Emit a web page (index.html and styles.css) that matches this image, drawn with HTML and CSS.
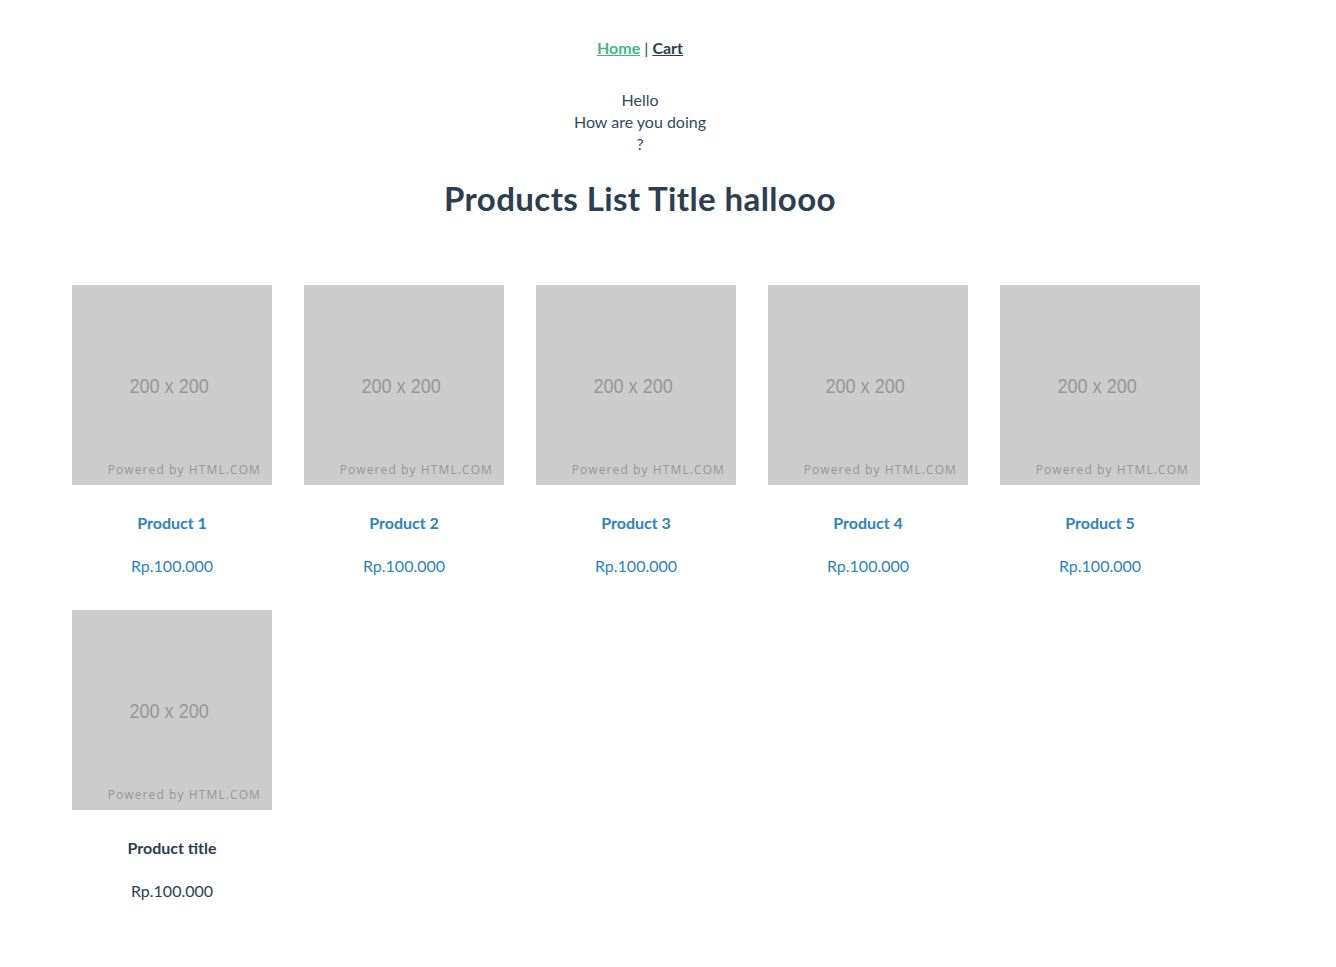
FILE: index.html
```html
<!DOCTYPE html>
<html>
<head>
<meta charset="utf-8">
<title>Products</title>
<link rel="stylesheet" href="styles.css">
</head>
<body>
<div class="app">
  <nav class="nav"><a class="nav-link active" href="#">Home</a> | <a class="nav-link" href="#">Cart</a></nav>
  <div class="greeting">
    <div>Hello</div>
    <div>How are you doing</div>
    <div>?</div>
  </div>
  <h1 class="list-title">Products List Title hallooo</h1>
  <div class="grid">
    <div class="card">
      <div class="thumb"><span class="dim">200 x 200</span><span class="powered">Powered by HTML.COM</span></div>
      <div class="name blue">Product 1</div>
      <div class="price blue">Rp.100.000</div>
    </div>
    <div class="card">
      <div class="thumb"><span class="dim">200 x 200</span><span class="powered">Powered by HTML.COM</span></div>
      <div class="name blue">Product 2</div>
      <div class="price blue">Rp.100.000</div>
    </div>
    <div class="card">
      <div class="thumb"><span class="dim">200 x 200</span><span class="powered">Powered by HTML.COM</span></div>
      <div class="name blue">Product 3</div>
      <div class="price blue">Rp.100.000</div>
    </div>
    <div class="card">
      <div class="thumb"><span class="dim">200 x 200</span><span class="powered">Powered by HTML.COM</span></div>
      <div class="name blue">Product 4</div>
      <div class="price blue">Rp.100.000</div>
    </div>
    <div class="card">
      <div class="thumb"><span class="dim">200 x 200</span><span class="powered">Powered by HTML.COM</span></div>
      <div class="name blue">Product 5</div>
      <div class="price blue">Rp.100.000</div>
    </div>
    <div class="card">
      <div class="thumb"><span class="dim">200 x 200</span><span class="powered">Powered by HTML.COM</span></div>
      <div class="name">Product title</div>
      <div class="price">Rp.100.000</div>
    </div>
  </div>
</div>
</body>
</html>
```
FILE: styles.css
```css
html, body {
  margin: 0;
  padding: 0;
  background: #fff;
}
body {
  font-family: Lato, "Open Sans", sans-serif;
  color: #2c3e50;
  -webkit-font-smoothing: antialiased;
}
.app {
  width: 1280px;
  text-align: center;
}
.nav {
  padding-top: 38px;
  font-size: 16px;
  line-height: 20px;
}
.nav-link {
  font-weight: bold;
  color: #2c3e50;
  text-decoration: underline;
}
.nav-link.active {
  color: #42b983;
}
.greeting {
  margin-top: 31px;
  font-size: 16px;
  line-height: 22px;
  color: #34495e;
}
.list-title {
  margin: 23px 0 0;
  font-size: 33px;
  line-height: 40px;
  font-weight: bold;
  letter-spacing: 0.4px;
}
.grid {
  display: flex;
  flex-wrap: wrap;
  column-gap: 32px;
  row-gap: 33px;
  padding: 67px 72px 40px;
}
.card {
  width: 200px;
}
.thumb {
  position: relative;
  width: 200px;
  height: 200px;
  background: #cccccc;
  display: flex;
  align-items: center;
  justify-content: center;
}
.dim {
  font-family: "Liberation Sans", Arial, sans-serif;
  font-size: 21px;
  color: #969696;
  transform: scaleX(0.86);
  margin-left: -6px;
  margin-top: 2px;
}
.powered {
  position: absolute;
  right: 11px;
  bottom: 7px;
  font-family: "Open Sans", sans-serif;
  font-size: 12px;
  letter-spacing: 1.1px;
  color: #959595;
}
.name {
  margin-top: 28px;
  font-size: 16px;
  line-height: 20px;
  font-weight: bold;
}
.price {
  margin-top: 22px;
  font-size: 16px;
  line-height: 22px;
}
.blue {
  color: #2c84bf;
}
```
